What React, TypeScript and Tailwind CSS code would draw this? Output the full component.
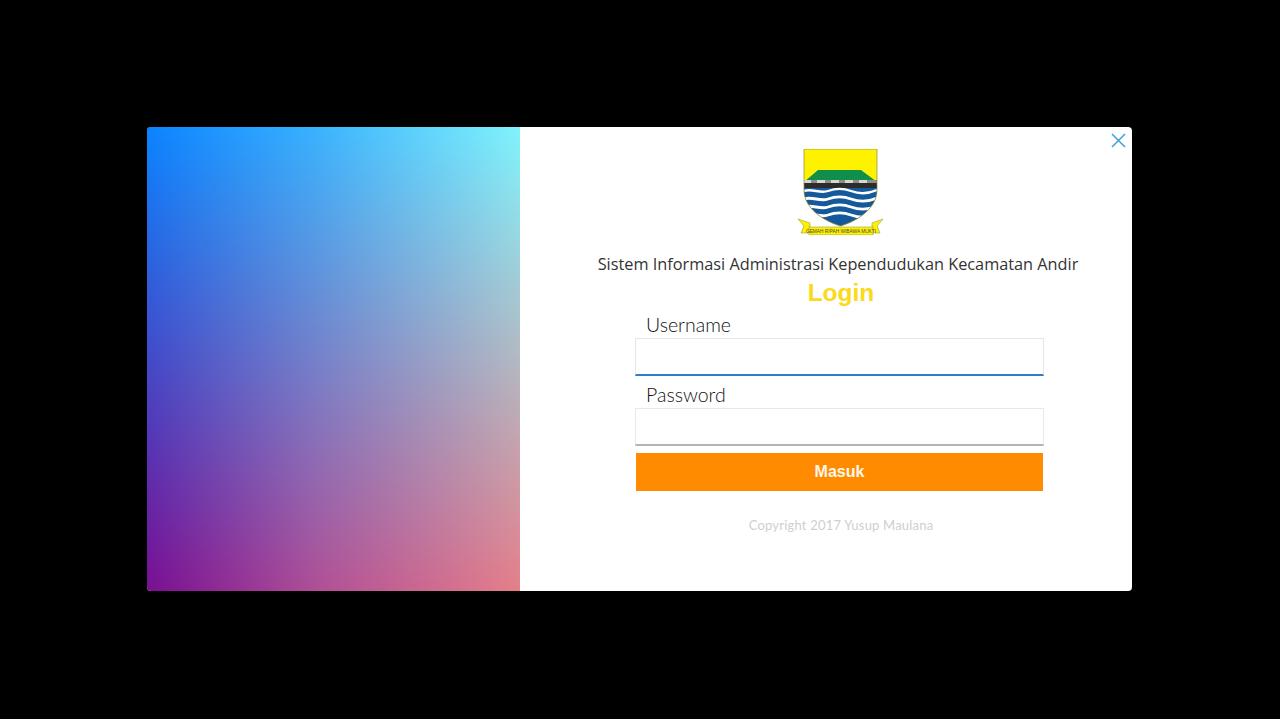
export default function App() {
  return (
    <div className="min-h-[719px] bg-black pt-[127px] pl-[147px]">
      <div className="relative flex w-[985px] h-[464px] rounded-[4px] overflow-hidden bg-white">
        <div className="relative w-[373px] shrink-0 bg-[linear-gradient(to_right,#7a0f92,#b04f96_45%,#e67f8a)]">
          <div className="absolute inset-0 bg-[linear-gradient(to_right,#0a84ff,#39b2fe_45%,#80f3fc)] [mask-image:linear-gradient(to_bottom,#000,#0000)]" />
        </div>
        <button className="absolute top-[5px] right-[5px] w-[17px] h-[17px]">
          <svg viewBox="0 0 17 17" className="w-[17px] h-[17px]" fill="none" stroke="#3f9fdc" strokeWidth="1.5">
            <path d="M2 2 15 15M15 2 2 15" />
          </svg>
        </button>
        <div className="flex-1 flex flex-col items-center pt-[22px] pl-[30px]">
          <div className="ml-[-1px] h-[86px]">
            <Logo />
          </div>
          <h2 className="mt-[17px] ml-[-6px] font-['Open_Sans',sans-serif] text-[16.3px] leading-[24px] text-[#333]">
            Sistem Informasi Administrasi Kependudukan Kecamatan Andir
          </h2>
          <h1 className="mt-[2px] font-['Liberation_Sans',sans-serif] font-bold text-[24.5px] leading-[30px] text-[#fbd91c]">Login</h1>
          <form className="ml-[-3px] mt-[3px] w-[409px] flex flex-col">
            <label className="pl-[11px] font-['Lato',sans-serif] font-light text-[19.5px] leading-[27px] text-[#111]">Username</label>
            <input className="h-[38px] w-full border border-[#e6e6e6] border-b-2 border-b-[#2c7fc9] bg-white outline-none" />
            <label className="mt-[5px] pl-[11px] font-['Lato',sans-serif] font-light text-[19.5px] leading-[27px] text-[#111]">Password</label>
            <input type="password" className="h-[38px] w-full border border-[#e8e8e8] border-b-2 border-b-[#b4b4b4] bg-white outline-none" />
            <button type="button" className="mt-[7px] ml-px h-[38px] w-[407px] bg-[#ff8c00] font-['Liberation_Sans',sans-serif] font-bold text-[16px] text-[#fff7ea]">Masuk</button>
          </form>
          <p className="mt-[25px] font-['Lato',sans-serif] text-[13px] leading-[18px] tracking-[0.2px] text-[#cfcfcf]">Copyright 2017 Yusup Maulana</p>
        </div>
      </div>
    </div>
  );
}

function Logo() {
  const shield = "M6 0H79V41C79 58 62 71 42.5 77C23 71 6 58 6 41Z";
  return (
    <svg width="86" height="86" viewBox="0 0 86 86">
      <defs>
        <clipPath id="shield">
          <path d={shield} />
        </clipPath>
      </defs>
      <path d={shield} fill="#fff200" />
      <g clipPath="url(#shield)">
        <path d="M6 33 20 21H63L79 33V35H6Z" fill="#0f8f4b" />
        <rect x="6" y="31" width="73" height="3" fill="#8e8e86" />
        <path d="M6 31H13V34H6ZM19 31h8v3h-8zM33 31h8v3h-8zM47 31h8v3h-8zM61 31h8v3h-8z" fill="#d8d8d0" />
        <rect x="6" y="34" width="73" height="5" fill="#2c2c2a" />
        <rect x="6" y="39" width="73" height="40" fill="#14599c" />
        <path d="M6 42C14 39 22 45 30 42S45 39 53 42 70 45 79 41" fill="none" stroke="#fff" strokeWidth="2.4" />
        <path d="M6 50C14 47 22 53 30 50S45 47 53 50 70 53 79 49" fill="none" stroke="#fff" strokeWidth="2.8" />
        <path d="M6 58C14 55 22 61 30 58S45 55 53 58 70 61 79 57" fill="none" stroke="#fff" strokeWidth="2.8" />
        <path d="M6 66C14 63 22 69 30 66S45 63 53 66 70 69 79 65" fill="none" stroke="#fff" strokeWidth="2.8" />
      </g>
      <path d={shield} fill="none" stroke="#8a8a3a" strokeWidth="0.7" />
      <path d="M0 70 12 74V84H3L6 77Z" fill="#fff200" stroke="#8a8a3a" strokeWidth="0.5" />
      <path d="M85 70 74 74V84H82L79 77Z" fill="#fff200" stroke="#8a8a3a" strokeWidth="0.5" />
      <rect x="11" y="78" width="64" height="8" fill="#fff200" stroke="#8a8a3a" strokeWidth="0.5" />
      <text x="43" y="84" textAnchor="middle" fontSize="4.8" fontFamily="Liberation Sans, sans-serif" fill="#444">GEMAH RIPAH WIBAWA MUKTI</text>
    </svg>
  );
}
